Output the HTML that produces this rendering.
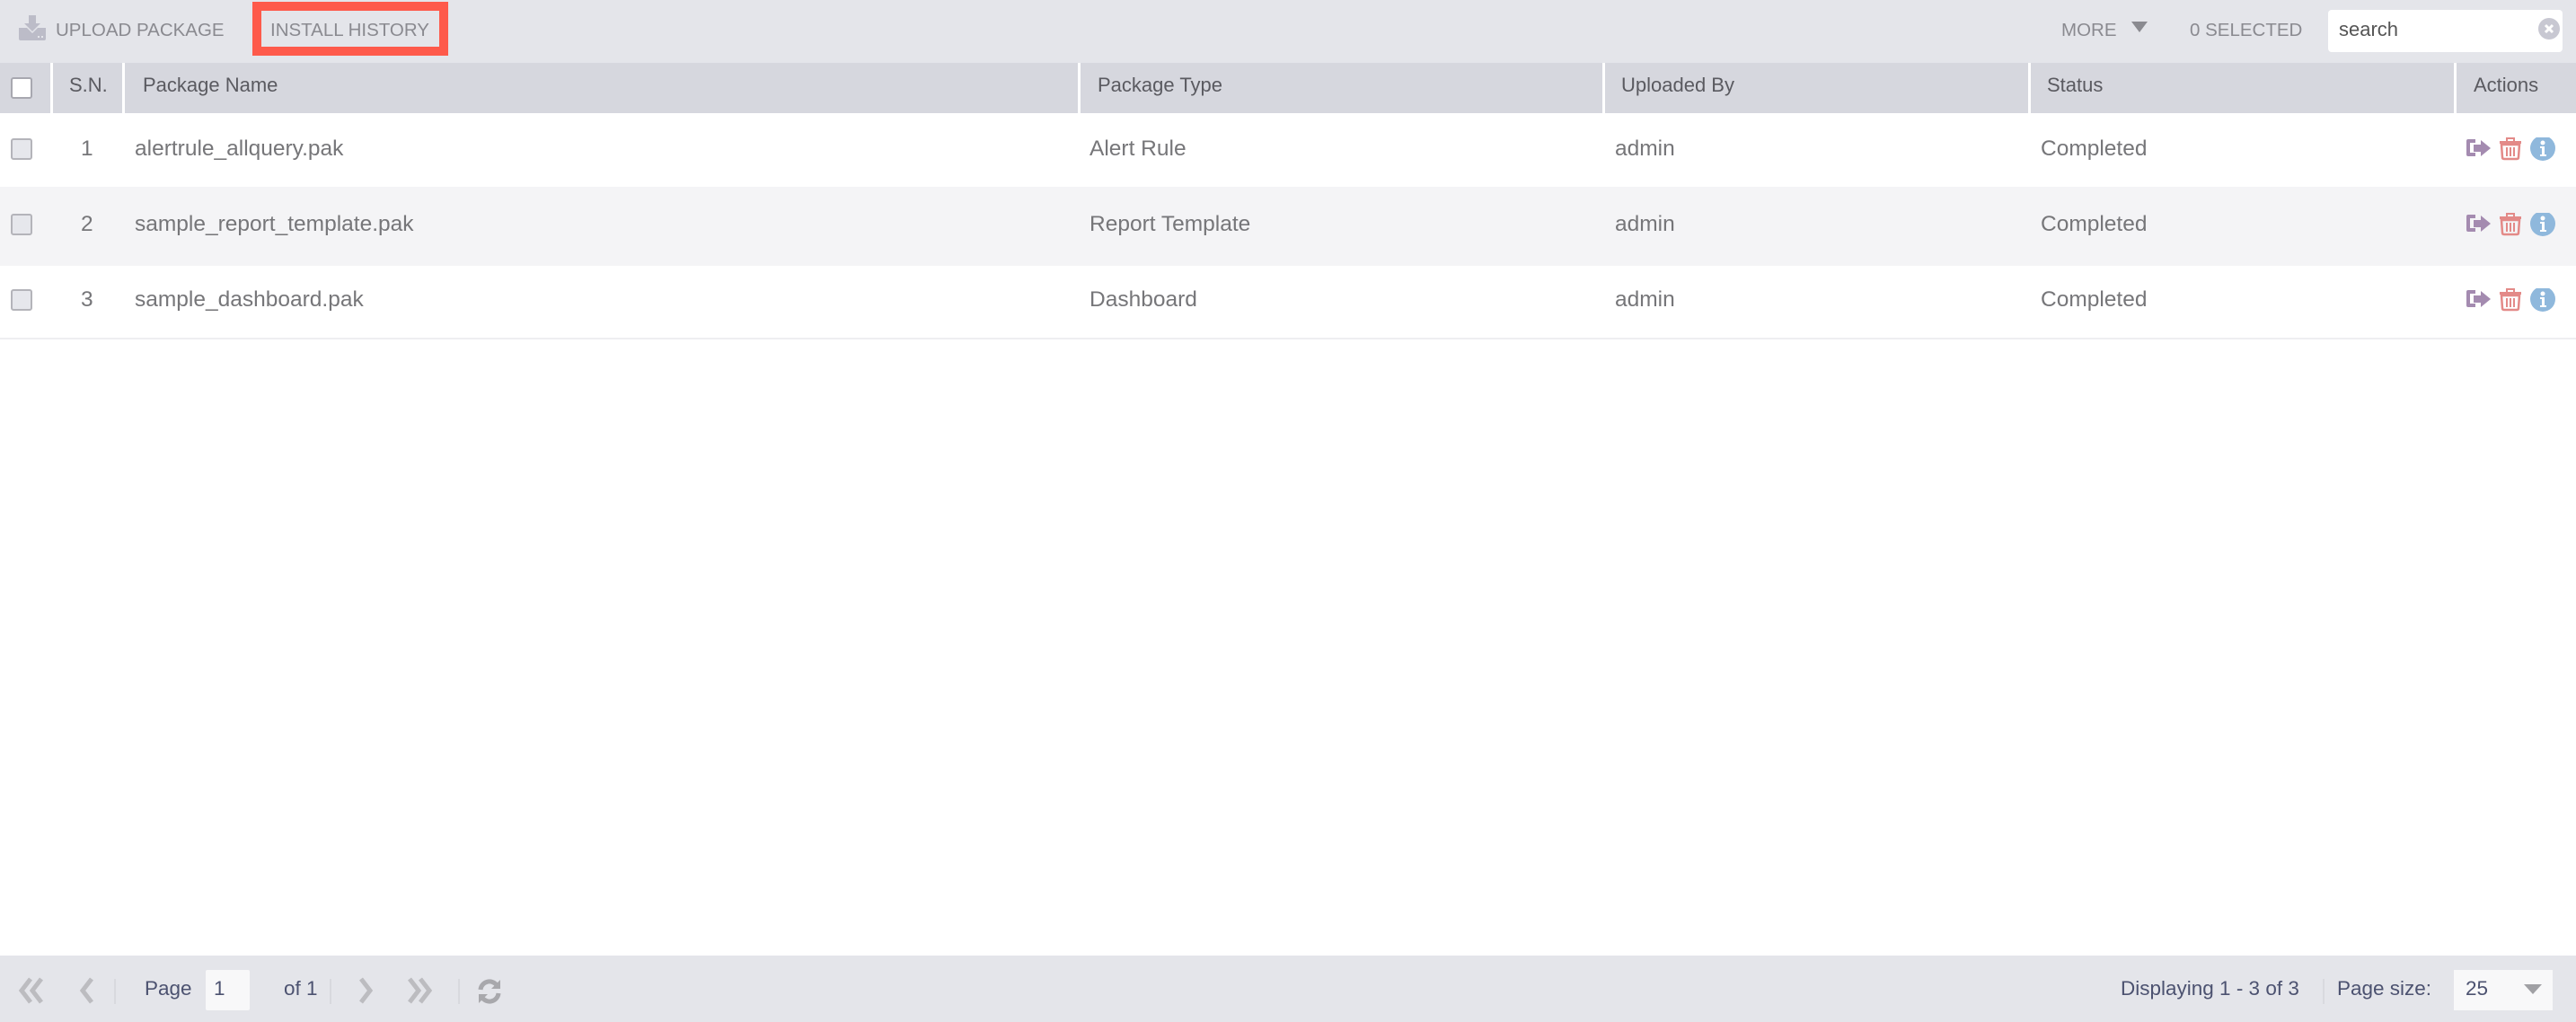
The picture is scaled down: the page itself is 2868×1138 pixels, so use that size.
<!DOCTYPE html>
<html><head><meta charset="utf-8"><style>
*{margin:0;padding:0;box-sizing:border-box}
body{width:2868px;height:1138px;background:#fff;font-family:"Liberation Sans",sans-serif;position:relative;overflow:hidden}
.a{position:absolute;white-space:nowrap}
.tb{left:0;top:0;width:2868px;height:70px;background:#e4e5ea}
.tt{font-size:20.5px;color:#8a8a90;top:22px}
.hd{left:0;top:70px;width:2868px;height:56px;background:#d6d7de}
.dv{top:70px;width:3px;height:56px;background:#fff}
.ht{font-size:22px;color:#5a5a60;top:82px}
.rt{font-size:24.5px;color:#767679}
.cb{width:24px;height:24px;border:2px solid #b4b4ba;border-radius:3px;background:#e6e7ec}
.ft{left:0;top:1064px;width:2868px;height:74px;background:#e4e5ea}
.fx{font-size:22.5px;color:#4c5270;top:1088px}
.sp{top:1090px;width:2px;height:28px;background:#d8d9de}
</style></head><body>
<div class="a tb"></div>
<svg class="a" style="left:21px;top:17px" width="30" height="28" viewBox="0 0 30 28"><path d="M0 14h9l6 6 6-6h9v12q0 2-2 2H2q-2 0-2-2z" fill="#bcbcc8"/><path d="M11 0h8v9h5l-9 9-9-9h5z" fill="#bcbcc8"/><rect x="21" y="23" width="2" height="2" fill="#e4e5ea"/><rect x="25" y="23" width="2" height="2" fill="#e4e5ea"/></svg>
<div class="a tt" style="left:62px">UPLOAD PACKAGE</div>
<div class="a" style="left:281px;top:2px;width:218px;height:60px;border:10px solid #fe5a4b"></div>
<div class="a tt" style="left:301px">INSTALL HISTORY</div>
<div class="a tt" style="left:2295px">MORE</div>
<svg class="a" style="left:2373px;top:24px" width="18" height="14"><path d="M0 0h18L9 12z" fill="#8a8a90"/></svg>
<div class="a tt" style="left:2438px">0 SELECTED</div>
<div class="a" style="left:2592px;top:11px;width:261px;height:47px;background:#fff;border-radius:4px"></div>
<div class="a" style="left:2604px;top:20px;font-size:22px;color:#555">search</div>
<svg class="a" style="left:2826px;top:20px" width="24" height="24"><circle cx="12" cy="12" r="12" fill="#c8c8d2"/><path d="M8 8l8 8M16 8l-8 8" stroke="#fff" stroke-width="3"/></svg>

<div class="a hd"></div>
<div class="a dv" style="left:56px"></div><div class="a dv" style="left:136px"></div><div class="a dv" style="left:1200px"></div><div class="a dv" style="left:1784px"></div><div class="a dv" style="left:2258px"></div><div class="a dv" style="left:2732px"></div>
<div class="a" style="left:12px;top:86px;width:24px;height:24px;background:#fff;border:2px solid #a8a8b0;border-radius:3px"></div>
<div class="a ht" style="left:77px">S.N.</div>
<div class="a ht" style="left:159px">Package Name</div>
<div class="a ht" style="left:1222px">Package Type</div>
<div class="a ht" style="left:1805px">Uploaded By</div>
<div class="a ht" style="left:2279px">Status</div>
<div class="a ht" style="left:2754px">Actions</div>

<div class="a" style="left:0;top:208px;width:2868px;height:88px;background:#f4f4f6"></div>
<div class="a" style="left:0;top:376px;width:2868px;height:2px;background:#eeeef1"></div>

<div class="a cb" style="left:12px;top:154px"></div>
<div class="a rt" style="left:90px;top:152px">1</div>
<div class="a rt" style="left:150px;top:152px">alertrule_allquery.pak</div>
<div class="a rt" style="left:1213px;top:152px">Alert Rule</div>
<div class="a rt" style="left:1798px;top:152px">admin</div>
<div class="a rt" style="left:2272px;top:152px">Completed</div>

<div class="a cb" style="left:12px;top:238px"></div>
<div class="a rt" style="left:90px;top:236px">2</div>
<div class="a rt" style="left:150px;top:236px">sample_report_template.pak</div>
<div class="a rt" style="left:1213px;top:236px">Report Template</div>
<div class="a rt" style="left:1798px;top:236px">admin</div>
<div class="a rt" style="left:2272px;top:236px">Completed</div>

<div class="a cb" style="left:12px;top:322px"></div>
<div class="a rt" style="left:90px;top:320px">3</div>
<div class="a rt" style="left:150px;top:320px">sample_dashboard.pak</div>
<div class="a rt" style="left:1213px;top:320px">Dashboard</div>
<div class="a rt" style="left:1798px;top:320px">admin</div>
<div class="a rt" style="left:2272px;top:320px">Completed</div>

<svg width="0" height="0" style="position:absolute"><defs><g id="ic">
<path d="M11 1H3Q1 1 1 3v15q0 2 2 2h8v-4H5V5h6z" fill="#a48bb0"/><path d="M9 7h8V2l11 9-11 9v-5H9z" fill="#a48bb0"/>
<g transform="translate(38,0)"><rect x="0" y="3" width="24" height="3" fill="#e38a88"/><rect x="8" y="0" width="8" height="4" fill="none" stroke="#e38a88" stroke-width="2"/><path d="M2 7h20l-1 14q0 2-2 2H5q-2 0-2-2z" fill="none" stroke="#e38a88" stroke-width="2.5"/><path d="M8 10v10M12 10v10M16 10v10" stroke="#e38a88" stroke-width="2"/></g>
<g transform="translate(72,-1)"><circle cx="14" cy="12" r="14" fill="#8fb8dc"/><circle cx="14" cy="6" r="2.5" fill="#fff"/><path d="M11 10h5v9h2v2h-7v-2h2v-7h-2z" fill="#fff"/></g>
</g></defs></svg>
<svg class="a" style="left:2745px;top:153px" width="110" height="28"><use href="#ic" y="1"/></svg>
<svg class="a" style="left:2745px;top:237px" width="110" height="28"><use href="#ic" y="1"/></svg>
<svg class="a" style="left:2745px;top:321px" width="110" height="28"><use href="#ic" y="1"/></svg>

<div class="a ft"></div>
<svg class="a" style="left:20px;top:1088px" width="34" height="30"><path d="M14 2L4 15l10 13M26 2L16 15l10 13" fill="none" stroke="#bcbcc0" stroke-width="5"/></svg>
<svg class="a" style="left:84px;top:1088px" width="24" height="30"><path d="M18 2L8 15l10 13" fill="none" stroke="#bcbcc0" stroke-width="5"/></svg>
<div class="a sp" style="left:127px"></div>
<div class="a fx" style="left:161px">Page</div>
<div class="a" style="left:229px;top:1080px;width:49px;height:45px;background:#f8f8f9;border-radius:2px"></div>
<div class="a fx" style="left:238px">1</div>
<div class="a fx" style="left:316px">of 1</div>
<div class="a sp" style="left:367px"></div>
<svg class="a" style="left:396px;top:1088px" width="24" height="30"><path d="M6 2l10 13L6 28" fill="none" stroke="#bcbcc0" stroke-width="5"/></svg>
<svg class="a" style="left:450px;top:1088px" width="36" height="30"><path d="M6 2l10 13L6 28M18 2l10 13-10 13" fill="none" stroke="#bcbcc0" stroke-width="5"/></svg>
<div class="a sp" style="left:510px"></div>
<svg class="a" style="left:530px;top:1089px" width="30" height="30" viewBox="0 0 30 30"><path d="M5 13a10 10 0 0 1 18-5" fill="none" stroke="#a8a8ac" stroke-width="5"/><path d="M27 2v10H17z" fill="#a8a8ac"/><path d="M25 17a10 10 0 0 1-18 5" fill="none" stroke="#a8a8ac" stroke-width="5"/><path d="M3 28V18h10z" fill="#a8a8ac"/></svg>
<div class="a fx" style="left:2361px">Displaying 1 - 3 of 3</div>
<div class="a sp" style="left:2586px"></div>
<div class="a fx" style="left:2602px">Page size:</div>
<div class="a" style="left:2732px;top:1080px;width:110px;height:45px;background:#f8f8f9"></div>
<div class="a fx" style="left:2745px">25</div>
<svg class="a" style="left:2810px;top:1096px" width="20" height="12"><path d="M0 0h20L10 11z" fill="#a0a0a4"/></svg>
</body></html>
